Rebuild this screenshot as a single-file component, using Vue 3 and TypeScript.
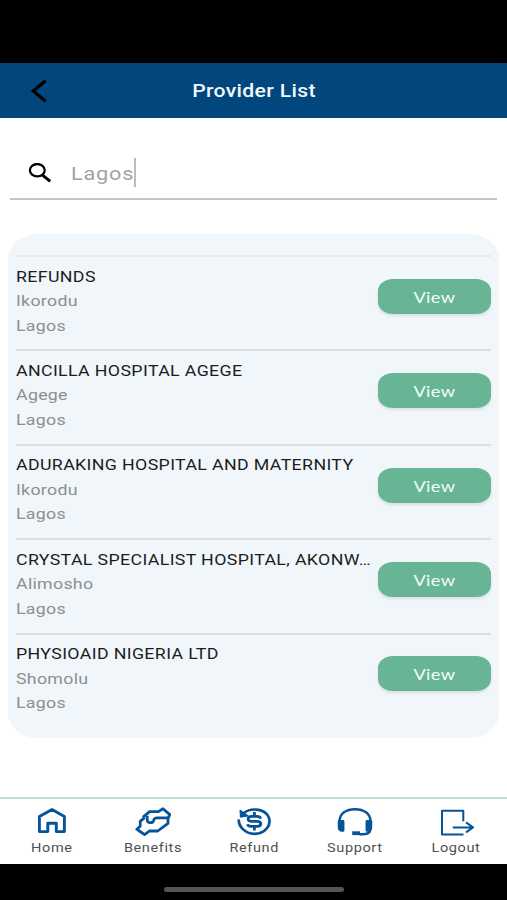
<script setup lang="ts">
import { ref } from 'vue'

interface Provider {
  name: string
  area: string
  state: string
}

type TabIcon = 'home' | 'benefits' | 'refund' | 'support' | 'logout'

const query = ref('Lagos')

const providers: Provider[] = [
  { name: 'REFUNDS', area: 'Ikorodu', state: 'Lagos' },
  { name: 'ANCILLA HOSPITAL AGEGE', area: 'Agege', state: 'Lagos' },
  { name: 'ADURAKING HOSPITAL AND MATERNITY', area: 'Ikorodu', state: 'Lagos' },
  { name: 'CRYSTAL SPECIALIST HOSPITAL, AKONW…', area: 'Alimosho', state: 'Lagos' },
  { name: 'PHYSIOAID NIGERIA LTD', area: 'Shomolu', state: 'Lagos' },
]

const tabs: { label: string; icon: TabIcon }[] = [
  { label: 'Home', icon: 'home' },
  { label: 'Benefits', icon: 'benefits' },
  { label: 'Refund', icon: 'refund' },
  { label: 'Support', icon: 'support' },
  { label: 'Logout', icon: 'logout' },
]
</script>

<template>
  <div class="screen">
    <div class="status"></div>
    <header class="header">
      <svg class="back" viewBox="0 0 18 24" width="18" height="24">
        <path d="M15.6 1.8 L3.2 12 L15.6 22.2" fill="none" stroke="#000" stroke-width="3.2" />
      </svg>
      <h1 class="title">Provider List</h1>
    </header>

    <main class="content">
      <div class="search">
        <svg class="glass" viewBox="0 0 24 20" width="24" height="20">
          <ellipse cx="9.3" cy="7.2" rx="7.4" ry="6.2" fill="none" stroke="#000" stroke-width="2.3" />
          <path d="M14.2 11.8 L22.2 18.4" stroke="#000" stroke-width="3" />
        </svg>
        <span class="query">{{ query }}</span>
        <i class="caret"></i>
      </div>

      <section class="card">
        <article v-for="p in providers" :key="p.name" class="row">
          <div class="info">
            <div class="name">{{ p.name }}</div>
            <div class="place">{{ p.area }}</div>
            <div class="place">{{ p.state }}</div>
          </div>
          <button class="view" type="button"><span class="view-label">View</span></button>
        </article>
      </section>
    </main>

    <nav class="tabs">
      <a v-for="t in tabs" :key="t.label" class="tab">
        <svg class="icon" viewBox="0 0 36 30" width="36" height="30" fill="none" stroke="#07539a" stroke-width="2.9" stroke-linejoin="round">
          <path v-if="t.icon === 'home'" d="M5.4 10.6 L18 3.6 L30.4 10.6 V25.6 H22.3 V17.3 H13.8 V25.6 H5.4 Z" />
          <g v-else-if="t.icon === 'benefits'" stroke-width="2.8">
            <path d="M9.6 11.6 L5.2 15.4 V20.2 L1.8 23.2 L4.4 25 L9.6 28.6 L14.4 25 H22.8 L33 17.4 V12.4 L34.8 8.6 L28 2.8 L23.4 5.6 H14.6 L7.8 11.4" />
            <path d="M33.4 11.8 H22.4 Q19 11.8 18.6 14.4 Q18.2 16.6 15.4 16.6 Q12.4 16.6 12.2 14 V9.8" />
          </g>
          <g v-else-if="t.icon === 'refund'" stroke-width="2.7">
            <path d="M8 7 C14 1.8 28 2 32.4 10.5 C36.6 19.5 28 28 18.4 27.8 C8.8 27.6 2.4 20.4 2.8 13.4" />
            <path d="M4 4 L4.4 11.2 L12.4 9.9 Z" fill="#07539a" stroke-width="1" />
            <path d="M24.7 12.6 Q24 10.4 21 10.4 H16 Q12.1 10.4 12.1 12.9 Q12.1 15.3 16 15.3 H21 Q24.8 15.3 24.8 17.8 Q24.8 20.3 21 20.3 H15.5 Q12 20.3 11.6 18.2 M18.4 6 V10 M18.4 20.4 V24.6" stroke-width="2.8" />
          </g>
          <g v-else-if="t.icon === 'support'">
            <path d="M2.6 17 V15 C2.6 7.6 9.2 3.2 18 3.2 S33.4 7.6 33.4 15 V22.8 Q33.4 28.2 26 28.2 H22.4" stroke-width="2.5" />
            <path d="M2.2 15.5 H6 V24.4 H4.6 Q2.2 24 2.2 21 Z M33.8 15.5 H30 V24.4 H31.4 Q33.8 24 33.8 21 Z" fill="#07539a" />
            <path d="M15.2 27.2 H23" stroke-width="3.8" />
          </g>
          <g v-else stroke-width="2">
            <path d="M25.3 15.3 V4.8 H4 V28.6 H25.5" />
            <path d="M14.8 21.4 H34.4 M28 16.4 L35 21.4 L28 26.4" />
          </g>
        </svg>
        <span class="tab-label">{{ t.label }}</span>
      </a>
    </nav>
    <footer class="system"><i class="pill"></i></footer>
  </div>
</template>

<style>
body {
  margin: 0;
  background: #000;
}
</style>

<style scoped>
.screen {
  width: 507px;
  height: 900px;
  display: flex;
  flex-direction: column;
  background: #fff;
  font-family: Roboto, "Liberation Sans", sans-serif;
  overflow: hidden;
}
.status {
  height: 63px;
  background: #000;
}
.header {
  box-sizing: border-box;
  height: 55px;
  padding: 0 29px 0 30px;
  display: grid;
  grid-template-columns: 18px 1fr 18px;
  align-items: center;
  background: #01477d;
}
.back {
  margin-top: 1px;
}
.title {
  margin: 0;
  text-align: center;
  font-size: 18px;
  font-weight: 500;
  letter-spacing: 0.3px;
  color: #f2f7fb;
  transform: scaleX(1.175);
}
.content {
  flex: 1;
  padding: 31px 8px 0;
}
.search {
  box-sizing: border-box;
  height: 51px;
  margin: 0 2px;
  padding: 0 0 2px 18px;
  display: flex;
  align-items: center;
  border-bottom: 2px solid #c5c5c5;
}
.query {
  width: 62px;
  margin-left: 19px;
  padding-top: 3px;
  font-size: 18px;
  line-height: 24px;
  letter-spacing: 0.6px;
  color: #a2a2a2;
  white-space: nowrap;
  transform: scaleX(1.21);
  transform-origin: left;
}
.caret {
  width: 2px;
  height: 29px;
  margin-left: 1px;
  background: #bdbdbd;
}
.card {
  box-sizing: border-box;
  height: 504px;
  width: 491px;
  margin-top: 34px;
  padding: 21px 8px 0;
  border-radius: 29px / 25px;
  background: #f1f6fa;
}
.row {
  box-sizing: border-box;
  height: 94.4px;
  padding-top: 7px;
  display: flex;
  align-items: flex-start;
  justify-content: space-between;
  border-top: 2px solid #dadfe3;
}
.row:first-child {
  border-top-color: #e5eaee;
}
.info {
  width: 302px;
  padding-top: 0.6px;
  line-height: 24.5px;
  transform: scaleX(1.185);
  transform-origin: left;
}
.name {
  font-size: 15px;
  letter-spacing: 0.3px;
  color: #1b1d1f;
  white-space: nowrap;
}
.place {
  font-size: 15px;
  letter-spacing: 0.24px;
  color: #8b8f92;
}
.view {
  width: 113px;
  height: 35px;
  margin: 14.8px 0 0;
  padding: 0;
  flex: none;
  border: 0;
  border-radius: 15px / 12px;
  background: #67b594;
  box-shadow: 0 2px 3px rgba(60, 70, 80, 0.13);
  font-family: Lato, sans-serif;
  font-size: 16px;
  color: #f4fbf8;
}
.view-label {
  display: inline-block;
  letter-spacing: 0.3px;
  transform: translateY(-0.5px) scaleX(1.14);
}
.tabs {
  box-sizing: border-box;
  height: 67px;
  padding: 7px 0 0 1px;
  display: grid;
  grid-template-columns: repeat(5, 1fr);
  border-top: 2px solid #b9e6d4;
}
.tab {
  display: flex;
  flex-direction: column;
  align-items: center;
}
.tab-label {
  margin-top: 4px;
  font-size: 12.5px;
  line-height: 16px;
  letter-spacing: 0.5px;
  color: #505050;
  transform: scaleX(1.165);
}
.system {
  height: 36px;
  display: flex;
  justify-content: center;
  align-items: center;
  background: #000;
}
.pill {
  width: 180px;
  height: 5px;
  margin-top: 14px;
  border-radius: 3px;
  background: #555;
}
</style>
